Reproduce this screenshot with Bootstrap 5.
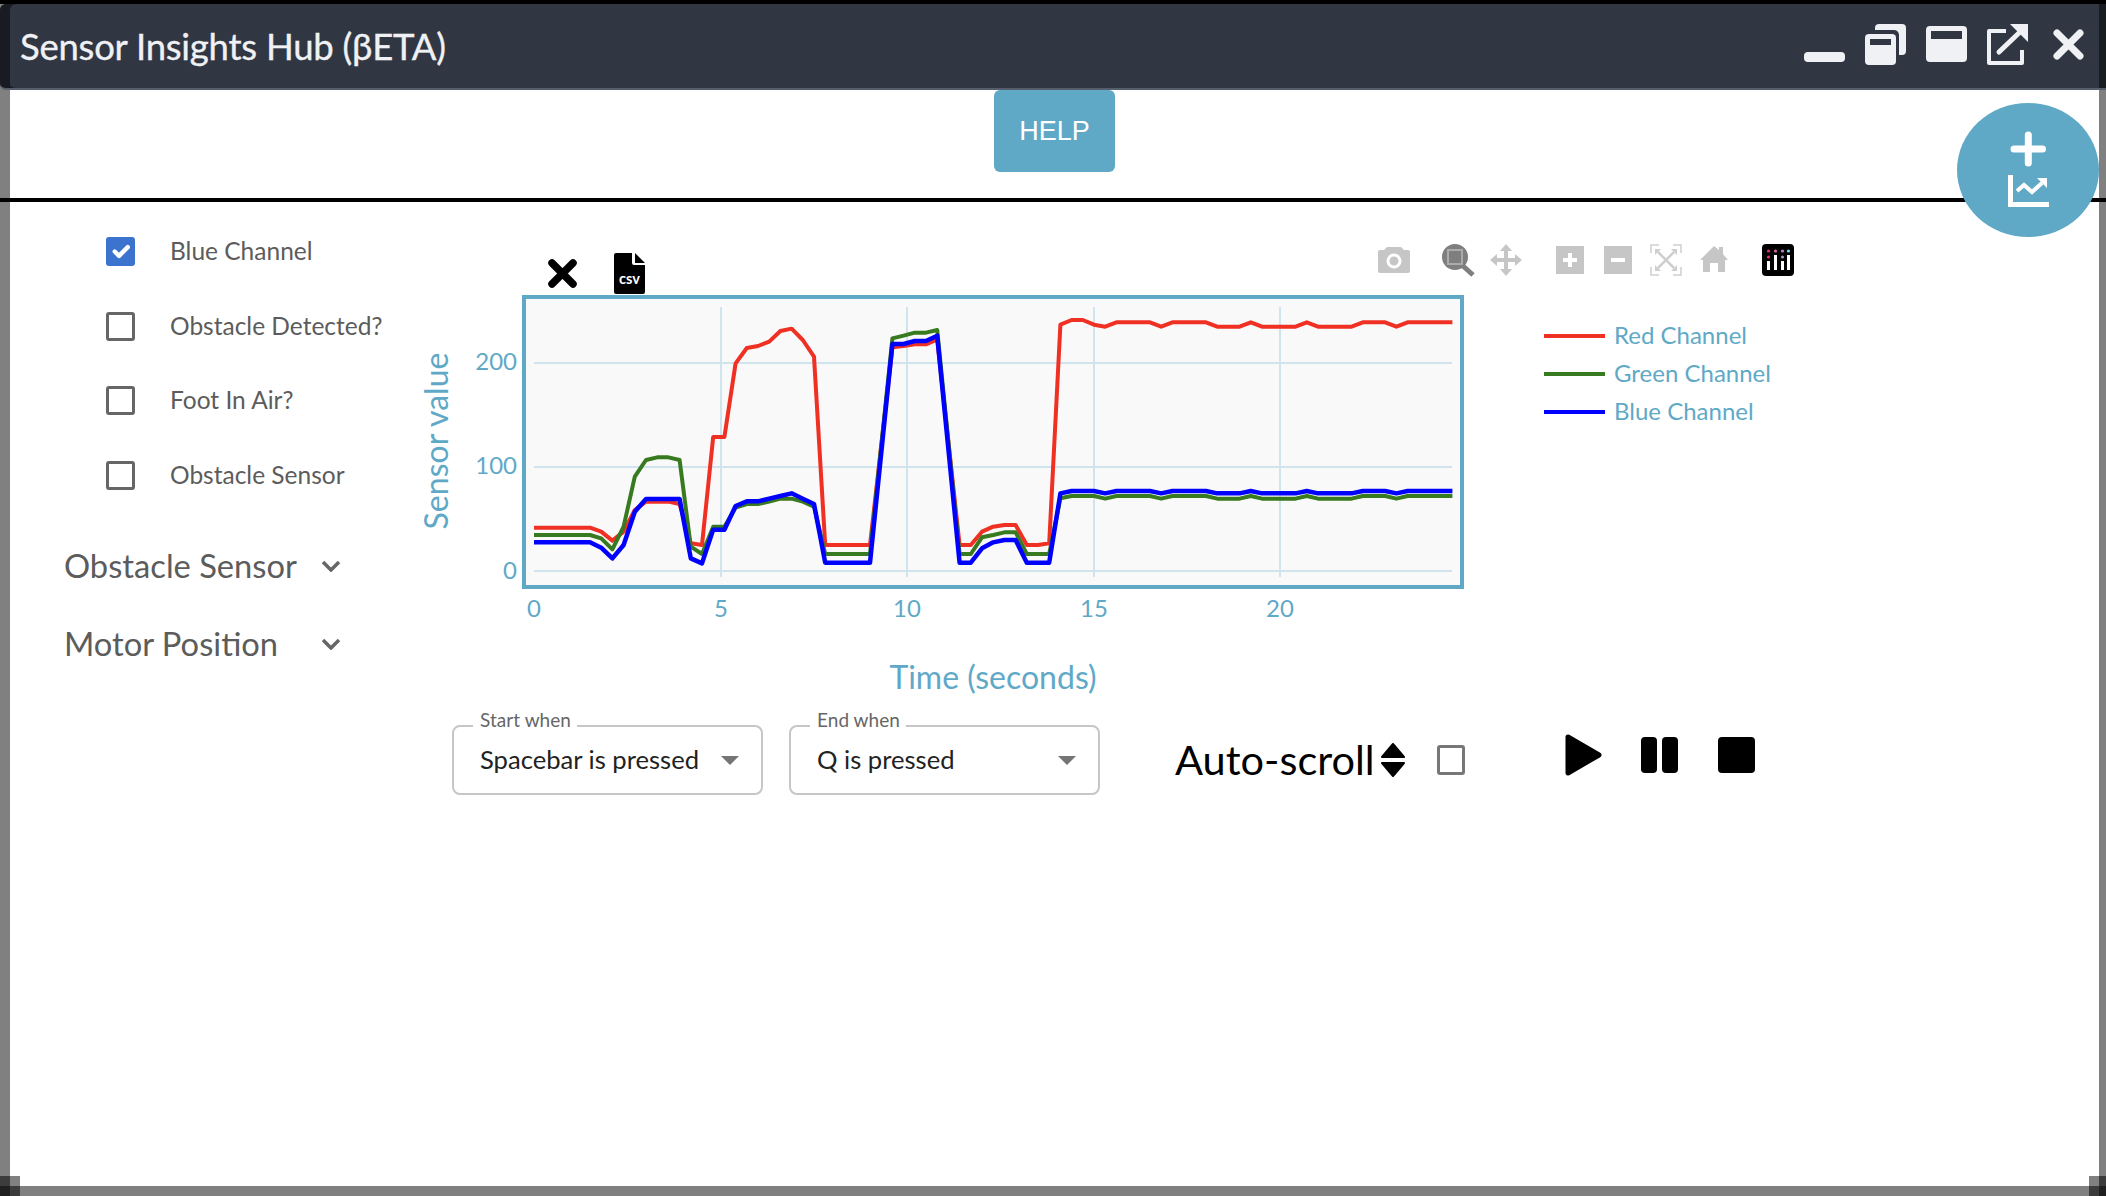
<!DOCTYPE html>
<html lang="en">
<head>
<meta charset="utf-8">
<title>Sensor Insights Hub</title>
<link href="https://cdn.jsdelivr.net/npm/bootstrap@5.3.0/dist/css/bootstrap.min.css" rel="stylesheet">
<style>
html,body{height:100%;margin:0}
body{background:#808080;font-family:Lato,"Noto Sans",sans-serif;overflow:hidden}
.shell{position:relative;width:2106px;height:1196px;border-top:4px solid #000;padding-bottom:10px}
.win-head{height:86px;background:#303742;border-bottom:2px solid #565e6b;border-radius:6px 0 0 6px;box-shadow:inset 10px 0 #181b21,inset -7px 0 #181b21;padding:0 17px 0 20px}
.win-title{font-size:36.5px;color:#f0f1f5;line-height:1;letter-spacing:-.25px;-webkit-text-stroke:.35px #f0f1f5;margin-top:1px}
.win-icons{gap:20px;margin-bottom:3px}
.win-icons svg{display:block;width:41px;height:41px}
.help-row{height:108px;margin:0 7px 0 10px;background:#fff}
.help-btn{width:121px;height:82px;background:#5fa9c7;border:0;border-radius:6px;color:#fff;font:27px "Liberation Sans",Arial,sans-serif;padding:0}
.help-btn:hover{background:#5fa9c7;color:#fff}
.divider{height:4px;background:#000}
.work{height:984px;margin:0 7px 0 10px;background:#fff}
.side-col{width:400px;flex:none;padding-top:35px}
.chan-list{gap:45.5px;padding-left:96px}
.chan-row{height:29px;gap:35px}
.form-check-input.chan-box{width:29px;height:29px;margin:0;border:3px solid #666;border-radius:3px;background-color:#fff;flex:none}
.form-check-input.chan-box:checked{background-color:#3b73cf;border:0;background-size:100%}
.chan-label{font-size:24.5px;color:#5c5c5c;line-height:27px;margin-top:-2px}
.group-list{margin-top:56px;padding-left:54px;gap:38px}
.group-row{height:40px;width:277px}
.group-name{font-size:32.7px;color:#5c5c5c;line-height:40px}
.plot-svg{display:block;width:1420px;height:500px}
.plot-svg text{font-family:Lato,"Noto Sans",sans-serif;fill:#5fa9c7}
.ctl-row{margin:23px 0 0 42px;height:70px}
.ctl-field{position:relative;width:311px;height:70px}
.ctl-field+.ctl-field{margin-left:26px}
.ctl-label{position:absolute;left:21px;top:-16px;padding:0 6px 0 7px;background:#fff;font-size:19px;color:#666;line-height:22px;letter-spacing:.05px}
.form-select.ctl-select{height:70px;padding:0 0 2px 26px;border:2px solid #c6c6c6;border-radius:8px;font-size:25.6px;color:#222;font-family:inherit;box-shadow:none;background-size:18px 9px;background-position:right 22px center;background-image:url("data:image/svg+xml,%3Csvg xmlns='http://www.w3.org/2000/svg' viewBox='0 0 20 10'%3E%3Cpath d='M0 0h20L10 10z' fill='%23757575'/%3E%3C/svg%3E")}
.scroll-text{margin-left:75px;font-size:41.5px;color:#000;line-height:68px;white-space:nowrap;margin-bottom:2px}
.scroll-icon{display:block;width:24px;height:34px;margin-left:6px}
.form-check-input.scroll-box{width:28px;height:30px;margin:0 0 0 32px;border:3px solid #777;border-radius:3px;flex:none}
.play-set{margin-left:100px;gap:39.5px;padding-bottom:10px}
.play-set svg{display:block;width:37px;height:42px}
.fab{position:absolute;left:1957px;top:99px;width:142px;height:134px;border-radius:50%;background:#5fa9c7;border:0;padding:0}
.fab svg{display:block;width:142px;height:134px}
.corner-l,.corner-r{position:absolute;bottom:0;width:20px;height:20px}
.corner-l{left:0;background:
linear-gradient(#202020,#202020) 0 10px/10px 10px no-repeat,
linear-gradient(#3c3c3c,#3c3c3c) 0 0/10px 10px no-repeat,
linear-gradient(#3c3c3c,#3c3c3c) 10px 10px/10px 10px no-repeat,
linear-gradient(#808080,#808080) 10px 0/10px 10px no-repeat}
.corner-r{right:0;width:17px;background:
linear-gradient(#202020,#202020) 10px 10px/7px 10px no-repeat,
linear-gradient(#3c3c3c,#3c3c3c) 10px 0/7px 10px no-repeat,
linear-gradient(#3c3c3c,#3c3c3c) 0 10px/10px 10px no-repeat,
linear-gradient(#808080,#808080) 0 0/10px 10px no-repeat}
</style>
</head>
<body>
<div class="shell">
  <header class="win-head d-flex align-items-center justify-content-between">
    <div class="win-title">Sensor Insights Hub (βETA)</div>
    <div class="win-icons d-flex align-items-center">
      <svg viewBox="0 0 41 41"><rect y="28" width="41" height="10" rx="4" fill="#f0f1f5"/></svg>
      <svg viewBox="0 0 41 41"><rect x="10" width="31" height="31" rx="4" fill="#f0f1f5"/><rect x="-3" y="6" width="37" height="38" rx="5" fill="#303742"/><rect y="10" width="31" height="31" rx="4" fill="#f0f1f5"/><rect x="5" y="15" width="21" height="6" fill="#303742"/></svg>
      <svg viewBox="0 0 41 41"><rect y="2" width="41" height="36" rx="4" fill="#f0f1f5"/><rect x="5" y="7" width="31" height="8" fill="#303742"/></svg>
      <svg viewBox="0 0 41 41"><path d="M19 7H2v32h33V26" fill="none" stroke="#f0f1f5" stroke-width="4" stroke-linejoin="round"/><path d="M12 28 33 8" stroke="#f0f1f5" stroke-width="5" stroke-linecap="round"/><path d="M23 0h18v18z" fill="#f0f1f5"/></svg>
      <svg viewBox="0 0 41 41"><path d="M9 9 32 32M32 9 9 32" stroke="#f0f1f5" stroke-width="7" stroke-linecap="round"/></svg>
    </div>
  </header>
  <div class="help-row d-flex justify-content-center align-items-start">
    <button type="button" class="btn help-btn">HELP</button>
  </div>
  <div class="divider"></div>
  <main class="work d-flex">
    <aside class="side-col">
      <div class="chan-list d-flex flex-column">
        <div class="chan-row d-flex align-items-center"><input class="form-check-input chan-box" type="checkbox" checked aria-label="Blue Channel"><span class="chan-label">Blue Channel</span></div>
        <div class="chan-row d-flex align-items-center"><input class="form-check-input chan-box" type="checkbox" aria-label="Obstacle Detected?"><span class="chan-label">Obstacle Detected?</span></div>
        <div class="chan-row d-flex align-items-center"><input class="form-check-input chan-box" type="checkbox" aria-label="Foot In Air?"><span class="chan-label">Foot In Air?</span></div>
        <div class="chan-row d-flex align-items-center"><input class="form-check-input chan-box" type="checkbox" aria-label="Obstacle Sensor"><span class="chan-label">Obstacle Sensor</span></div>
      </div>
      <div class="group-list d-flex flex-column">
        <div class="group-row d-flex align-items-center justify-content-between"><span class="group-name">Obstacle Sensor</span><svg width="20" height="12" viewBox="0 0 20 12"><path d="M2 2l8 8 8-8" fill="none" stroke="#666" stroke-width="3.5"/></svg></div>
        <div class="group-row d-flex align-items-center justify-content-between"><span class="group-name">Motor Position</span><svg width="20" height="12" viewBox="0 0 20 12"><path d="M2 2l8 8 8-8" fill="none" stroke="#666" stroke-width="3.5"/></svg></div>
      </div>
    </aside>
    <section class="flex-grow-1">
      <svg class="plot-svg" viewBox="410 202 1420 500">
        <rect x="524" y="297" width="938" height="290" fill="#f9f9f9" stroke="#5fa9c7" stroke-width="4"/>
        <g stroke="#d0e4ee" stroke-width="2">
          <path d="M534 363H1452M534 467H1452M534 571H1452M721 307V577M907 307V577M1094 307V577M1280 307V577"/>
        </g>
        <g transform="translate(534 230) scale(11.2 .33333)" fill="none" stroke-linejoin="round">
          <polyline vector-effect="non-scaling-stroke" stroke="#ef3023" stroke-width="4" points="0,893 5,893 6,905 7,932 8,905 9,840 10,815 12,815 13,822 14,940 15,945 16,621 17,621 18,400 19,354 20,348 21,335 22,303 23,296 24,330 25,380 26,945 30,945 32,352 33,348 34,343 35,343 36,328 38,945 39,945 40,905 41,890 42,885 43,885 44,945 45,945 46,940 47,284 48,270 49,270 50,284 51,290 52,277 55,277 56,290 57,277 60,277 61,290 63,290 64,277 65,290 68,290 69,277 70,290 73,290 74,277 76,277 77,290 78,277 82,277"/>
          <polyline vector-effect="non-scaling-stroke" stroke="#377a1f" stroke-width="4" points="0,915 5,915 6,925 7,958 8,890 9,740 10,690 11,682 12,682 13,690 14,950 15,972 16,890 17,890 18,833 19,822 20,822 21,815 22,806 23,806 24,815 25,830 26,972 30,972 32,325 33,317 34,308 35,308 36,300 38,972 39,972 40,922 41,915 42,907 43,907 44,972 46,972 47,805 48,798 50,798 51,806 52,798 55,798 56,806 57,798 60,798 61,806 63,806 64,798 65,806 68,806 69,798 70,806 73,806 74,798 76,798 77,806 78,798 82,798"/>
          <polyline vector-effect="non-scaling-stroke" stroke="#0000ff" stroke-width="4.5" points="0,937 5,937 6,953 7,985 8,945 9,845 10,807 13,807 14,985 15,1000 16,899 17,899 18,828 19,814 20,814 21,806 22,798 23,790 24,806 25,822 26,998 30,998 32,342 33,342 34,333 35,333 36,317 38,998 39,998 40,955 41,937 42,930 43,930 44,998 46,998 47,790 48,783 50,783 51,790 52,783 55,783 56,790 57,783 60,783 61,790 63,790 64,783 65,790 68,790 69,783 70,790 73,790 74,783 76,783 77,790 78,783 82,783"/>
        </g>
        <g font-size="24" text-anchor="end">
          <text x="517" y="370">200</text><text x="517" y="474">100</text><text x="517" y="579">0</text>
        </g>
        <g font-size="24" text-anchor="middle">
          <text x="534" y="617">0</text><text x="721" y="617">5</text><text x="907" y="617">10</text><text x="1094" y="617">15</text><text x="1280" y="617">20</text>
        </g>
        <text x="993" y="689" font-size="32" text-anchor="middle">Time (seconds)</text>
        <text transform="translate(448 441) rotate(-90)" font-size="32" text-anchor="middle">Sensor value</text>
        <g stroke-width="4"><path d="M1544 336h61" stroke="#ef3023"/><path d="M1544 374h61" stroke="#377a1f"/><path d="M1544 412h61" stroke="#0000ff"/></g>
        <g font-size="24">
          <text x="1614" y="344">Red Channel</text><text x="1614" y="382">Green Channel</text><text x="1614" y="420">Blue Channel</text>
        </g>
        <!-- close and csv -->
        <path d="M552 263 573 284M573 263 552 284" stroke="#000" stroke-width="7.5" stroke-linecap="round"/>
        <path d="M616 253h16v10a2 2 0 0 0 2 2h11v27a2 2 0 0 1-2 2h-27a2 2 0 0 1-2-2v-37a2 2 0 0 1 2-2z" fill="#000"/>
        <path d="M635 253l10 10h-10z" fill="#000"/>
        <text x="619" y="284" font-size="16" font-weight="700" textLength="21" lengthAdjust="spacingAndGlyphs" style="fill:#fff">csv</text>
        <!-- modebar -->
        <path d="M1384 250l3-3h14l3 3h4a2 2 0 0 1 2 2v19a2 2 0 0 1-2 2h-28a2 2 0 0 1-2-2v-19a2 2 0 0 1 2-2z" fill="#c6c6c6"/>
        <circle cx="1394" cy="261" r="6" fill="#c6c6c6" stroke="#fff" stroke-width="3"/>
        <circle cx="1455" cy="257" r="13" fill="#7f7f7f"/><rect x="1447" y="249" width="16" height="16" fill="#fff" opacity=".35"/><rect x="1449" y="251" width="12" height="12" fill="#7f7f7f"/><path d="M1463 266 1473 275" stroke="#7f7f7f" stroke-width="5"/>
        <path d="M1506 244l6 7h-4v7h7v-4l7 6-7 6v-4h-7v7h4l-6 7-6-7h4v-7h-7v4l-7-6 7-6v4h7v-7h-4z" fill="#c6c6c6"/>
        <rect x="1556" y="246" width="28" height="28" fill="#c6c6c6"/><path d="M1570 253v14M1563 260h14" stroke="#fff" stroke-width="4"/>
        <rect x="1604" y="246" width="28" height="28" fill="#c6c6c6"/><path d="M1611 260h14" stroke="#fff" stroke-width="4"/>
        <path d="M1651 253v-8h8M1673 245h8v8M1681 267v8h-8M1659 275h-8v-8" fill="none" stroke="#cfcfcf" stroke-width="1.5"/><path d="M1658 252l16 16M1674 252l-16 16" stroke="#cfcfcf" stroke-width="2.5"/><path d="M1655 249h6l-6 6zM1677 249h-6l6 6zM1655 271h6l-6-6zM1677 271h-6l6-6z" fill="#cfcfcf"/>
        <path d="M1714 246l5 4v-3h4v7l5 6h-3v12h-7v-9h-8v9h-7v-12h-3z" fill="#c6c6c6"/>
        <rect x="1762" y="244" width="32" height="32" rx="4" fill="#000"/>
        <g fill="#fff"><rect x="1767" y="261" width="3" height="9"/><rect x="1774" y="255" width="3" height="15"/><rect x="1781" y="261" width="3" height="9"/><rect x="1787" y="255" width="3" height="15"/></g>
        <g><circle cx="1768.5" cy="251" r="1.6" fill="#e62e73"/><circle cx="1775.5" cy="251" r="1.6" fill="#d46ba0"/><circle cx="1782.5" cy="251" r="1.6" fill="#a78bd4"/><circle cx="1788.5" cy="251" r="1.6" fill="#7fd0e8"/><circle cx="1768.5" cy="257" r="1.6" fill="#e62e73"/><circle cx="1782.5" cy="257" r="1.6" fill="#a78bd4"/></g>
      </svg>
      <div class="ctl-row d-flex align-items-center">
        <div class="ctl-field"><span class="ctl-label">Start when</span>
          <select class="form-select ctl-select" aria-label="Start when"><option>Spacebar is pressed</option></select></div>
        <div class="ctl-field"><span class="ctl-label">End when</span>
          <select class="form-select ctl-select" aria-label="End when"><option>Q is pressed</option></select></div>
        <span class="scroll-text">Auto-scroll</span>
        <svg class="scroll-icon" viewBox="0 0 24 34"><path d="M12 1 23 14H1zM12 33 1 20h22z" fill="#000" stroke="#000" stroke-linejoin="round" stroke-width="2"/></svg>
        <input class="form-check-input scroll-box" type="checkbox" aria-label="Auto-scroll">
        <div class="play-set d-flex align-items-center">
          <svg viewBox="0 0 37 42"><path d="M3 3 34 21 3 39z" fill="#000" stroke="#000" stroke-width="5" stroke-linejoin="round"/></svg>
          <svg viewBox="0 0 37 42"><rect y="3" width="16" height="36" rx="4" fill="#000"/><rect x="21" y="3" width="16" height="36" rx="4" fill="#000"/></svg>
          <svg viewBox="0 0 37 42"><rect y="3" width="37" height="36" rx="4" fill="#000"/></svg>
        </div>
      </div>
    </section>
  </main>
  <button type="button" class="fab" aria-label="Add chart">
    <svg viewBox="0 0 142 134"><path d="M71.3 32v28M57 46h28.5" stroke="#fff" stroke-width="7" stroke-linecap="round" fill="none"/><path d="M53.5 72v29.500h38.500" fill="none" stroke="#fff" stroke-width="5"/><path d="M60 88l7-6 8 7 10-9" fill="none" stroke="#fff" stroke-width="4"/><path d="M80 75h10v10z" fill="#fff"/></svg>
  </button>
  <div class="corner-l"></div>
  <div class="corner-r"></div>
</div>
<script src="https://cdn.jsdelivr.net/npm/bootstrap@5.3.0/dist/js/bootstrap.bundle.min.js"></script>
</body>
</html>
